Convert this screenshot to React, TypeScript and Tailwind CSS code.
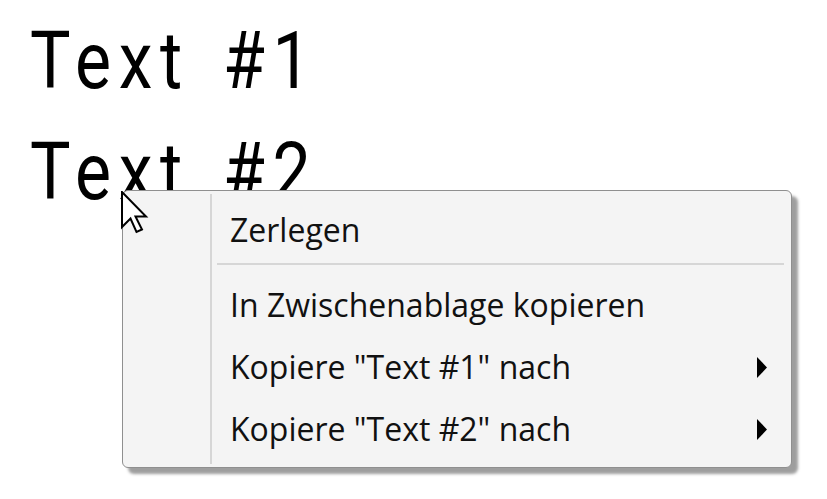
import React from "react";

const Arrow = () => (
  <svg width="10" height="21" viewBox="0 0 10 21" className="block">
    <polygon points="0,0 10,10.5 0,21" fill="#000" />
  </svg>
);

const Item = ({ label, sub }: { label: string; sub?: boolean }) => (
  <div className="flex h-[62px] items-center">
    <div className="w-[88px] shrink-0" />
    <div className="flex flex-1 items-center justify-between pl-[19px] pr-[24px]">
      <span>{label}</span>
      {sub && <Arrow />}
    </div>
  </div>
);

export default function App() {
  return (
    <div className="relative h-[499px] w-[827px] overflow-hidden bg-white">
      <div className="pl-[30px] pt-[6px]">
        <div
          className="origin-left scale-x-[0.85] text-[80px] font-normal leading-[111px] tracking-[9px] text-black [word-spacing:10px]"
          style={{ fontFamily: 'Roboto, sans-serif' }}
        >
          <div>Text #1</div>
          <div>Text #2</div>
        </div>
      </div>

      <div
        className="absolute left-[122px] top-[190px] h-[278px] w-[670px] rounded-[6px] border border-[#8f8f8f] bg-[#f4f4f4] text-[32px] text-[#111] shadow-[6px_6px_3px_rgba(0,0,0,0.38)]"
        style={{ fontFamily: '"Open Sans", "Noto Sans", sans-serif' }}
      >
        <div className="relative flex h-full flex-col pt-[8px]">
          <div className="absolute bottom-[3px] left-[87px] top-[3px] w-[2px] bg-[#d6d6d6]" />
          <Item label="Zerlegen" />
          <div className="flex h-[13px] items-start pt-[2px]">
            <div className="ml-[94px] mr-[7px] h-[2px] flex-1 bg-[#d6d6d6]" />
          </div>
          <Item label="In Zwischenablage kopieren" />
          <Item label={'Kopiere "Text #1" nach'} sub />
          <Item label={'Kopiere "Text #2" nach'} sub />
        </div>
      </div>

      <svg
        className="absolute left-[121px] top-[191px]"
        width="28"
        height="44"
        viewBox="-1 -1 28 44"
      >
        <polygon
          points="0,0 0,35 8.5,26.5 14.5,40 20,37.5 13.5,24.5 24,24.5"
          fill="#fff"
          stroke="#000"
          strokeWidth="2"
          strokeLinejoin="miter"
        />
      </svg>
    </div>
  );
}
